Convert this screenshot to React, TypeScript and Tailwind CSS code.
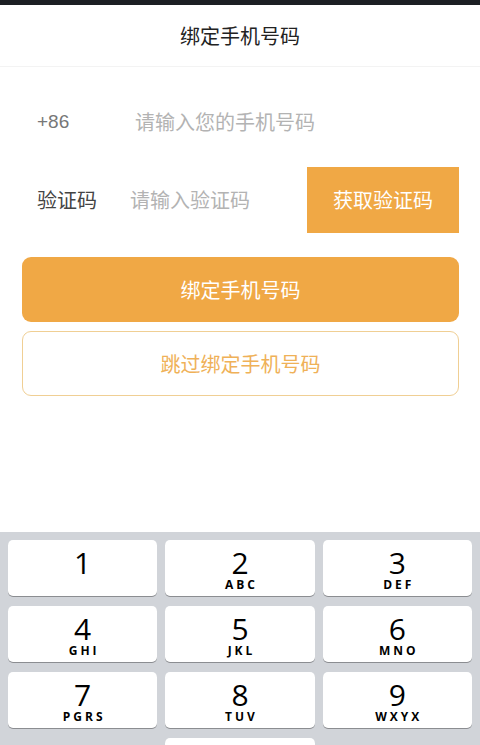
import React from 'react';

const keys = [
  { n: '1', l: '' },
  { n: '2', l: 'ABC' },
  { n: '3', l: 'DEF' },
  { n: '4', l: 'GHI' },
  { n: '5', l: 'JKL' },
  { n: '6', l: 'MNO' },
  { n: '7', l: 'PGRS' },
  { n: '8', l: 'TUV' },
  { n: '9', l: 'WXYX' },
];

const cjk = "font-['Noto_Sans_CJK_SC',sans-serif]";

const Key: React.FC<{ n: string; l: string }> = ({ n, l }) => (
  <div className="h-[56px] bg-white rounded-[5px] shadow-[0_1px_0_#8b8d91] flex flex-col items-center justify-start pt-[8px] text-black font-['Open_Sans',sans-serif]">
    <span className="text-[30px] leading-[30px]">{n}</span>
    {l && (
      <span className="text-[12px] leading-[12px] font-bold tracking-[3px] pl-[3px] mt-[1px]">
        {l}
      </span>
    )}
  </div>
);

export default function App() {
  return (
    <div className={`w-[480px] h-[745px] overflow-hidden bg-white flex flex-col ${cjk}`}>
      <div className="h-[5px] bg-[#1c1f23] shrink-0" />
      <div className="h-[62px] shrink-0 flex items-center justify-center border-b border-[#f3f3f3] text-[20px] text-[#222]">
        绑定手机号码
      </div>

      <div className="mt-[27px] h-[56px] shrink-0 flex items-center pl-[37px] text-[20px]">
        <span className="w-[98px] text-[#777] font-['Liberation_Sans',sans-serif] text-[19px]">+86</span>
        <span className="text-[#b3b3b3]">请输入您的手机号码</span>
      </div>

      <div className="mt-[17px] h-[66px] shrink-0 flex items-center pl-[37px] pr-[21px] text-[20px]">
        <span className="w-[93px] text-[#444]">验证码</span>
        <span className="flex-1 text-[#b3b3b3]">请输入验证码</span>
        <button className="w-[152px] h-full bg-[#f0a845] text-white text-[20px]">获取验证码</button>
      </div>

      <div className="pl-[22px] pr-[21px] mt-[24px] flex flex-col gap-[9px] shrink-0">
        <button className="h-[65px] rounded-[9px] bg-[#f0a845] text-white text-[20px]">绑定手机号码</button>
        <button className="h-[65px] rounded-[9px] border border-[#f0cf94] bg-white text-[#efb158] text-[20px]">
          跳过绑定手机号码
        </button>
      </div>

      <div className="mt-[136px] shrink-0 bg-[#d1d4d9] px-2 pt-2 pb-2">
        <div className="grid grid-cols-3 gap-x-2 gap-y-[10px]">
          {keys.map((k) => (
            <Key key={k.n} n={k.n} l={k.l} />
          ))}
          <div />
          <Key n="0" l="" />
          <div />
        </div>
      </div>
    </div>
  );
}
